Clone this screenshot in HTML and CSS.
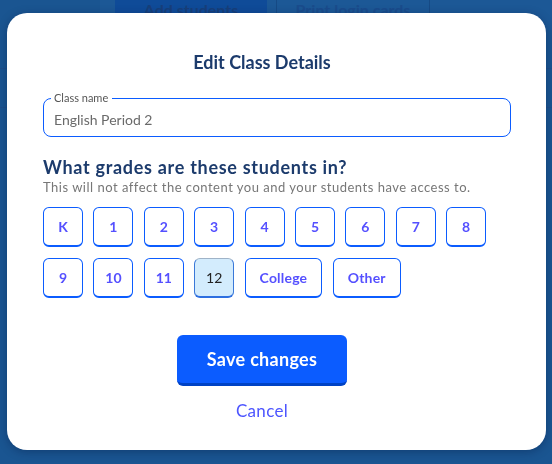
FILE: index.html
```html
<!DOCTYPE html>
<html lang="en">
<head>
    <meta charset="UTF-8">
    <meta name="viewport" content="width=device-width, initial-scale=1.0">
    <title>Edit Class Details</title>
    <link rel="stylesheet" href="styles.css">
</head>
<body>
    <!-- Page behind the dialog -->
    <div class="page">
        <div class="tabs">
            <div class="tab tab-active">Add students</div>
            <div class="tab">Print login cards</div>
        </div>
        <div class="page-row"></div>
        <div class="page-row"></div>
    </div>

    <!-- Dialog -->
    <div class="overlay">
        <div class="modal">
            <h1 class="title">Edit Class Details</h1>

            <div class="field">
                <label class="field-label" for="className">Class name</label>
                <input class="field-input" type="text" id="className" value="English Period 2">
            </div>

            <h2 class="question">What grades are these students in?</h2>
            <p class="hint">This will not affect the content you and your students have access to.</p>

            <div class="grades">
                <button class="grade">K</button>
                <button class="grade">1</button>
                <button class="grade">2</button>
                <button class="grade">3</button>
                <button class="grade">4</button>
                <button class="grade">5</button>
                <button class="grade">6</button>
                <button class="grade">7</button>
                <button class="grade">8</button>
                <button class="grade">9</button>
                <button class="grade">10</button>
                <button class="grade">11</button>
                <button class="grade grade-selected">12</button>
                <button class="grade grade-wide">College</button>
                <button class="grade grade-wide">Other</button>
            </div>

            <div class="actions">
                <button class="save">Save changes</button>
                <button class="cancel">Cancel</button>
            </div>
        </div>
    </div>
</body>
</html>
```

FILE: styles.css
```css
body {
    margin: 0;
    width: 552px;
    height: 464px;
    overflow: hidden;
    background-color: #1a5591;
    font-family: Lato, "Open Sans", sans-serif;
}

/* Page behind the dialog */
.page {
    height: 464px;
}

.tabs {
    display: flex;
    margin-left: 100px;
    padding-left: 15px;
    height: 30px;
    background-color: #1c5896;
}

.tab {
    width: 152px;
    padding-top: 1px;
    border-right: 1px solid #164a85;
    text-align: center;
    font-size: 16px;
    font-weight: 700;
    line-height: 18px;
    color: #1a4c8c;
}

.tab + .tab {
    margin-left: 9px;
    border-left: 1px solid #164a85;
}

.tab-active {
    background-color: #0f4b98;
    border-right: none;
    color: #173f7a;
}

.page-row {
    height: 38px;
    border-bottom: 1px solid #1f4f8a;
}

/* Dialog */
.overlay {
    position: fixed;
    top: 0;
    left: 0;
    right: 0;
    bottom: 0;
    padding: 13px 6px 14px 7px;
}

.modal {
    height: 437px;
    box-sizing: border-box;
    padding: 37px 35px 0 36px;
    background-color: #fff;
    border-radius: 20px;
    box-shadow: 0 2px 10px rgba(0, 20, 60, 0.35);
}

.title {
    margin: 0 30px 0 0;
    text-align: center;
    font-size: 18px;
    line-height: 24px;
    font-weight: 700;
    color: #1c3b6c;
}

/* Class name field */
.field {
    position: relative;
    margin-top: 24px;
}

.field-label {
    position: absolute;
    top: -6px;
    left: 8px;
    padding: 0 4px 0 3px;
    background-color: #fff;
    font-size: 11px;
    line-height: 11px;
    color: #555;
}

.field-input {
    display: block;
    width: 100%;
    height: 39px;
    box-sizing: border-box;
    padding: 3px 10px 0;
    border: 1px solid #0b5cff;
    border-radius: 8px;
    font-family: inherit;
    font-size: 14px;
    color: #6a6a6a;
    outline: none;
}

.question {
    margin: 18px 0 0;
    font-size: 18px;
    line-height: 24px;
    font-weight: 700;
    letter-spacing: 0.7px;
    color: #1c3b6c;
}

.hint {
    margin: 0;
    font-size: 13px;
    line-height: 16px;
    letter-spacing: 0.5px;
    color: #777;
}

/* Grade buttons */
.grades {
    display: flex;
    flex-wrap: wrap;
    gap: 11px 10.4px;
    margin-top: 12px;
    width: 460px;
}

.grade {
    width: 40px;
    height: 40px;
    padding: 0;
    box-sizing: border-box;
    background-color: #fff;
    border: 1px solid #0b5cff;
    border-bottom-width: 2px;
    border-radius: 6px;
    font-family: inherit;
    font-size: 14px;
    font-weight: 700;
    color: #5550ff;
    cursor: pointer;
}

.grade-selected {
    background-color: #d3ecfd;
    border-color: #9fb3c8 #3a78d8 #2e6fe0;
    color: #222;
    font-weight: 400;
}

.grade-wide {
    width: auto;
    padding: 0 14px;
    letter-spacing: 0.2px;
}

/* Footer buttons */
.actions {
    display: flex;
    flex-direction: column;
    align-items: center;
    margin: 37px 30px 0 0;
}

.save {
    width: 170px;
    height: 51px;
    background-color: #0b5cff;
    border: none;
    border-bottom: 3px solid #0042c4;
    border-radius: 6px;
    font-family: inherit;
    font-size: 18px;
    font-weight: 700;
    letter-spacing: 0.3px;
    color: #fff;
    cursor: pointer;
}

.cancel {
    margin-top: 14px;
    padding: 0;
    background: none;
    border: none;
    font-family: inherit;
    font-size: 17px;
    line-height: 22px;
    letter-spacing: 0.3px;
    color: #4d55ff;
    cursor: pointer;
}
```
